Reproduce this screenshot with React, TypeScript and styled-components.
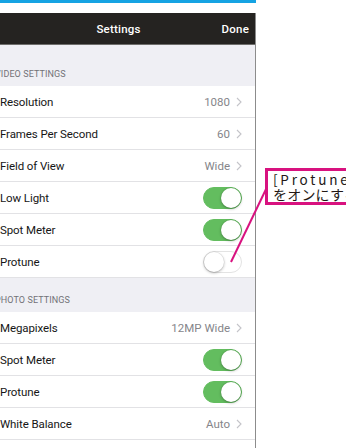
import React from "react";
import styled, { createGlobalStyle } from "styled-components";

const GlobalStyle = createGlobalStyle`
  html, body { margin: 0; padding: 0; background: #ffffff; overflow: hidden; }
  body { font-family: Roboto, "Liberation Sans", Arial, sans-serif; }
  * { box-sizing: border-box; }
`;

const Page = styled.div`
  position: relative;
  width: 346px;
  height: 448px;
  overflow: hidden;
  background: #ffffff;
`;

const TopBar = styled.div`
  width: 256px;
  height: 3px;
  background: #15a3e3;
`;

const Screen = styled.div`
  margin-top: 10px;
  margin-left: -20px;
  width: 276px;
  border-right: 1px solid #8c8c8c;
  background: #efeff4;
`;

const NavBar = styled.div`
  height: 32px;
  background: #252321;
  border-bottom: 1px solid #6e6d6b;
  display: grid;
  grid-template-columns: 1fr auto 1fr;
  align-items: center;
  padding: 0 6px 0 8px;
  color: #ffffff;
  font-size: 11.5px;
  font-weight: 500;
`;

const NavTitle = styled.div`
  grid-column: 2;
  letter-spacing: 0.2px;
`;

const NavAction = styled.div`
  grid-column: 3;
  justify-self: end;
  letter-spacing: 0.2px;
`;

const SectionHeader = styled.div<{ $h: number }>`
  height: ${(p) => p.$h}px;
  display: flex;
  align-items: flex-end;
  padding: 0 0 7px 15px;
  font-size: 9px;
  color: #727277;
  letter-spacing: 0.1px;
`;

const Row = styled.div`
  height: 32px;
  background: #ffffff;
  border-bottom: 1px solid #e2e2e5;
  display: flex;
  align-items: center;
  justify-content: space-between;
  padding: 0 13px 0 20px;
  font-size: 11.5px;
  color: #161616;
`;

const Label = styled.span`
  letter-spacing: -0.1px;
`;

const Value = styled.span`
  display: flex;
  align-items: center;
  gap: 6px;
  color: #85858a;
`;

const Track = styled.div<{ $on: boolean }>`
  width: 39px;
  height: 22px;
  border-radius: 11px;
  padding: 1px;
  display: flex;
  justify-content: ${(p) => (p.$on ? "flex-end" : "flex-start")};
  background: ${(p) => (p.$on ? "#63bd5f" : "#ffffff")};
  border: 1px solid ${(p) => (p.$on ? "#63bd5f" : "#e3e3e3")};
`;

const Knob = styled.div`
  width: 20px;
  height: 20px;
  margin: -1px;
  border-radius: 50%;
  background: #ffffff;
  box-shadow: 0 1px 3px rgba(0, 0, 0, 0.3), 0 0 0 0.5px rgba(0, 0, 0, 0.08);
`;

const Callout = styled.div`
  position: absolute;
  left: 265px;
  top: 168px;
  width: 120px;
  height: 37px;
  border: 3px solid #d8127f;
  background: #ffffff;
  padding: 1px 0 0 5px;
  font-family: "Noto Sans CJK JP", "Liberation Sans", sans-serif;
  font-size: 13.5px;
  line-height: 15px;
  color: #231815;
  z-index: 2;
  white-space: nowrap;
`;

const CalloutLatin = styled.div`
  letter-spacing: 2.8px;
`;

const CalloutJa = styled.div`
  font-size: 14px;
  letter-spacing: 0.2px;
`;

const Leader = styled.svg`
  position: absolute;
  left: 0;
  top: 0;
  z-index: 1;
  pointer-events: none;
`;

const Chevron = () => (
  <svg width="6" height="10" viewBox="0 0 6 10">
    <path d="M1 1 L5 5 L1 9" fill="none" stroke="#c4c4c9" strokeWidth="1.1" />
  </svg>
);

const Toggle = ({ on }: { on: boolean }) => (
  <Track $on={on}>
    <Knob />
  </Track>
);

type Item =
  | { label: string; value: string }
  | { label: string; toggle: boolean };

const video: Item[] = [
  { label: "Resolution", value: "1080" },
  { label: "Frames Per Second", value: "60" },
  { label: "Field of View", value: "Wide" },
  { label: "Low Light", toggle: true },
  { label: "Spot Meter", toggle: true },
  { label: "Protune", toggle: false },
];

const photo: Item[] = [
  { label: "Megapixels", value: "12MP Wide" },
  { label: "Spot Meter", toggle: true },
  { label: "Protune", toggle: true },
  { label: "White Balance", value: "Auto" },
  { label: "Continuous Rate", value: "" },
];

const renderRow = (it: Item, i: number) => (
  <Row key={i}>
    <Label>{it.label}</Label>
    {"toggle" in it ? (
      <Toggle on={it.toggle} />
    ) : (
      <Value>
        {it.value}
        <Chevron />
      </Value>
    )}
  </Row>
);

export default function App() {
  return (
    <Page>
      <GlobalStyle />
      <TopBar />
      <Screen>
        <NavBar>
          <NavTitle>Settings</NavTitle>
          <NavAction>Done</NavAction>
        </NavBar>
        <SectionHeader $h={41}>VIDEO SETTINGS</SectionHeader>
        {video.map(renderRow)}
        <SectionHeader $h={34}>PHOTO SETTINGS</SectionHeader>
        {photo.map(renderRow)}
      </Screen>
      <Leader width="346" height="448" viewBox="0 0 346 448">
        <line x1="268" y1="185" x2="231" y2="262" stroke="#d8127f" strokeWidth="2" />
      </Leader>
      <Callout>
        <CalloutLatin>[Protune]</CalloutLatin>
        <CalloutJa>をオンにする</CalloutJa>
      </Callout>
    </Page>
  );
}
